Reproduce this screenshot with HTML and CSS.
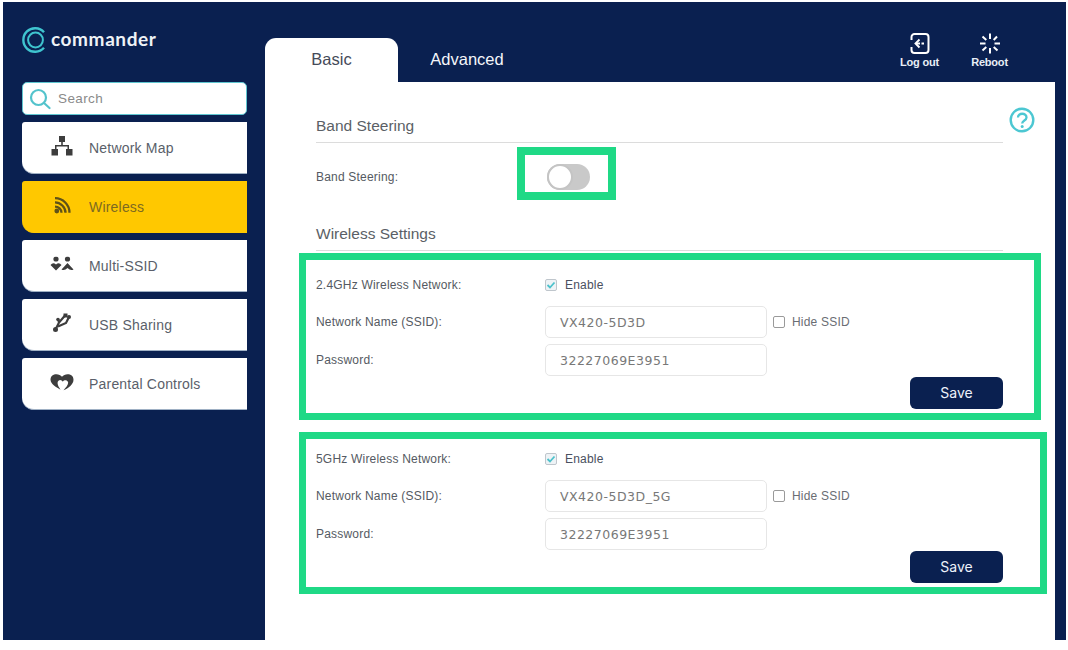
FILE: index.html
```html
<!DOCTYPE html>
<html lang="en">
<head>
<meta charset="utf-8">
<title>Commander</title>
<link rel="stylesheet" href="styles.css">
</head>
<body>
<div class="app">
  <aside class="sidebar">
    <div class="logo">
      <svg class="logo-mark" width="26" height="26" viewBox="0 0 26 26" fill="none" stroke="#3fc4cf">
        <path d="M22 5.200A11.800 11.800 0 1 0 22 20.800" stroke-width="2.400"/>
        <circle cx="13.500" cy="13" r="7.400" stroke-width="2"/>
      </svg>
      <span class="logo-text">commander</span>
    </div>
    <div class="search">
      <svg width="22" height="22" viewBox="0 0 22 22" fill="none" stroke="#53c3cc" stroke-width="2.200">
        <circle cx="9.500" cy="9.500" r="7.500"/>
        <path d="M15 15l5.500 5" stroke-linecap="round"/>
      </svg>
      <span>Search</span>
    </div>
    <nav class="menu">
      <a class="menu-item">
        <svg class="menu-icon" width="22" height="20" viewBox="0 0 22 20" fill="#3d3d3d">
          <rect x="8" y="0" width="6" height="6"/>
          <rect x="0.500" y="13" width="6.500" height="6.500"/>
          <rect x="15" y="13" width="6.500" height="6.500"/>
          <path d="M10.200 6h1.600v3H18v4h-1.500v-2.500h-11V13H4V9h6.200z"/>
        </svg>
        <span>Network Map</span>
      </a>
      <a class="menu-item active">
        <svg class="menu-icon" width="20" height="18" viewBox="0 0 20 18" fill="none" stroke="#5f5218" stroke-width="2.300">
          <path d="M3 2C11 2 17.500 8.500 17.500 16.500"/>
          <path d="M3 6.200C8.500 6.200 13.500 11 13.500 16.500"/>
          <path d="M3 10.400C6.500 10.400 9.500 13 9.500 16.500"/>
          <circle cx="4.800" cy="14.800" r="2.400" fill="#5f5218" stroke="none"/>
        </svg>
        <span>Wireless</span>
      </a>
      <a class="menu-item">
        <svg class="menu-icon" width="24" height="16" viewBox="0 0 24 16" fill="#3d3d3d">
          <circle cx="6" cy="2.600" r="2.600"/>
          <circle cx="17.500" cy="2.600" r="2.600"/>
          <path d="M0.500 8.500Q3 5.500 6 8Q9 5.500 11.500 8.500L6 14Z"/>
          <path d="M11.500 13L17.500 6.500L23.500 13Q20.500 14.500 17.500 11.500Q14.500 14.500 11.500 13Z"/>
        </svg>
        <span>Multi-SSID</span>
      </a>
      <a class="menu-item">
        <svg class="menu-icon" width="20" height="20" viewBox="0 0 20 20" fill="none" stroke="#3d3d3d" stroke-width="2.200">
          <path d="M3.500 16.500L7 9.500L13 2.500"/>
          <path d="M7 9.500L6.500 7"/>
          <path d="M6 13.500L14 10L16.500 5"/>
          <circle cx="3.500" cy="16.500" r="2.500" fill="#3d3d3d" stroke="none"/>
          <rect x="11.500" y="0.500" width="4" height="4" fill="#3d3d3d" stroke="none"/>
          <circle cx="17" cy="4" r="2" fill="#3d3d3d" stroke="none"/>
          <circle cx="6" cy="6.500" r="1.800" fill="#3d3d3d" stroke="none"/>
        </svg>
        <span>USB Sharing</span>
      </a>
      <a class="menu-item">
        <svg class="menu-icon" width="24" height="18" viewBox="0 0 24 18" fill="#3d3d3d">
          <path d="M12 3.500C9 -0.500 0.500 0 0.500 6.500C0.500 11 6.500 14 10.500 16.500C8 13 6.500 9.500 8.500 7.500C10 6 12 7 12.800 8.500C14 6.500 17 6.500 18 8.800C18.800 11 16 14.500 13.500 17C18.500 15 23.500 11 23.500 6.500C23.500 0 15 -0.500 12 3.500Z"/>
        </svg>
        <span>Parental Controls</span>
      </a>
    </nav>
  </aside>
  <main class="main">
    <header class="topbar">
      <div class="tabs">
        <a class="tab active">Basic</a>
        <a class="tab">Advanced</a>
      </div>
      <div class="actions">
        <a class="action">
          <svg width="20" height="21" viewBox="0 0 20 21" fill="none" stroke="#fff" stroke-width="2">
            <path d="M1.500 7V4A3 3 0 0 1 4.500 1H15.500A3 3 0 0 1 18.500 4V17A3 3 0 0 1 15.500 20H4.500A3 3 0 0 1 1.500 17V14"/>
            <path d="M9.500 6.500L5.500 10.500L9.500 14.500" stroke-width="1.900"/>
            <path d="M6 10.500H10M11.500 10.500H14"/>
          </svg>
          <span>Log out</span>
        </a>
        <a class="action">
          <svg width="22" height="21" viewBox="0 0 22 21" fill="none" stroke="#fff" stroke-width="2">
            <path d="M11 0.500V6M11 15V20.500M1 10.500H6.500M15.500 10.500H21M3.500 3.500L7.300 7M14.700 14L18.500 17.500M18 3.500L14.700 7M7.300 14L3.500 17.500"/>
          </svg>
          <span>Reboot</span>
        </a>
      </div>
    </header>
    <section class="content">
      <svg class="help" width="26" height="26" viewBox="0 0 26 26" fill="none" stroke="#4cc7d2" stroke-width="2.400">
        <circle cx="13" cy="13" r="11.300"/>
        <path d="M9 10.500C9 5.500 17.500 5.500 17.500 10.500C17.500 13.500 13.200 13.500 13.200 16.500" stroke-width="2.300"/>
        <circle cx="13.200" cy="19.500" r="1.500" fill="#4cc7d2" stroke="none"/>
      </svg>
      <div class="mark mark-toggle"></div>
      <div class="mark mark-24"></div>
      <div class="mark mark-5"></div>

      <h2 class="section-title">Band Steering</h2>
      <div class="steer-row">
        <label class="field-label">Band Steering:</label>
        <span class="toggle"><span class="knob"></span></span>
      </div>

      <h2 class="section-title">Wireless Settings</h2>

      <div class="network first">
        <div class="row-enable">
          <label class="field-label">2.4GHz Wireless Network:</label>
          <span class="check on"><svg width="10" height="10" viewBox="0 0 10 10" fill="none" stroke="#4cc1cb" stroke-width="1.800"><path d="M1.500 5L4 7.500L8.500 2.500"/></svg></span>
          <span class="check-text dark">Enable</span>
        </div>
        <div class="row-input">
          <label class="field-label">Network Name (SSID):</label>
          <span class="input">VX420-5D3D</span>
          <span class="check"></span>
          <span class="check-text">Hide SSID</span>
        </div>
        <div class="row-input">
          <label class="field-label">Password:</label>
          <span class="input">32227069E3951</span>
        </div>
        <div class="row-save"><button class="save">Save</button></div>
      </div>

      <div class="network">
        <div class="row-enable">
          <label class="field-label">5GHz Wireless Network:</label>
          <span class="check on"><svg width="10" height="10" viewBox="0 0 10 10" fill="none" stroke="#4cc1cb" stroke-width="1.800"><path d="M1.500 5L4 7.500L8.500 2.500"/></svg></span>
          <span class="check-text dark">Enable</span>
        </div>
        <div class="row-input">
          <label class="field-label">Network Name (SSID):</label>
          <span class="input">VX420-5D3D_5G</span>
          <span class="check"></span>
          <span class="check-text">Hide SSID</span>
        </div>
        <div class="row-input">
          <label class="field-label">Password:</label>
          <span class="input">32227069E3951</span>
        </div>
        <div class="row-save"><button class="save">Save</button></div>
      </div>
    </section>
  </main>
</div>
</body>
</html>
```
FILE: styles.css
```css
* { box-sizing: border-box; }
html, body { margin: 0; padding: 0; background: #fff; }
body { font-family: "Liberation Sans", Arial, sans-serif; width: 1068px; height: 650px; overflow: hidden; }

.app {
  display: flex;
  width: 1063px;
  height: 638px;
  margin: 2px 0 0 3px;
  padding-right: 11px;
  background: #0a2050;
}

.sidebar { width: 262px; flex: none; padding: 0 18px 0 19px; }

.logo { display: flex; align-items: center; gap: 3px; height: 26px; margin-top: 25px; }
.logo-mark { flex: none; }
.logo-text { font-family: "Lato", sans-serif; font-size: 19px; font-weight: 700; color: #eef2f6; letter-spacing: 0.6px; line-height: 22px; margin-top: -2px; }

.search {
  display: flex;
  align-items: center;
  gap: 7px;
  height: 33px;
  margin-top: 29px;
  padding-left: 6px;
  background: #fff;
  border: 1.500px solid #5fc6d0;
  border-radius: 5px;
  font-size: 13.500px;
  letter-spacing: 0.4px;
  color: #8a8a8a;
}

.menu { display: flex; flex-direction: column; gap: 7px; margin-top: 7px; }
.menu-item {
  display: flex;
  align-items: center;
  height: 52px;
  padding-top: 1px;
  background: #fff;
  border-radius: 3px 0 0 12px;
  border-bottom: 1px solid #9fb0c4;
  font-size: 14px;
  letter-spacing: 0.2px;
  color: #5a5f6a;
  position: relative;
}
.menu-item span { margin-left: 67px; }
.menu-icon { position: absolute; left: 40px; top: 50%; transform: translate(-50%, -60%); }
.menu-item.active { background: #ffc800; border-bottom-color: #ffc800; color: #7d6a22; }

.main { flex: 1; display: flex; flex-direction: column; min-width: 0; }

.topbar { display: flex; justify-content: space-between; height: 80px; }
.tabs { display: flex; align-items: flex-end; }
.tab {
  display: flex;
  align-items: center;
  justify-content: center;
  width: 133px;
  height: 44px;
  padding-bottom: 1px;
  font-size: 16.500px;
  color: #f4f6fa;
}
.tab.active { background: #fff; color: #454a58; border-radius: 11px 11px 0 0; }
.tab:not(.active) { width: 138px; }

.actions { display: flex; gap: 32px; padding: 31px 46px 0 0; }
.action { display: flex; flex-direction: column; align-items: center; gap: 2px; width: 39px; font-size: 11px; font-weight: 700; color: #e9eef6; letter-spacing: -0.2px; white-space: nowrap; }
.action:first-child { position: relative; left: 1px; }

.content { flex: 1; position: relative; background: #fff; padding: 32px 52px 0 51px; }

.help { position: absolute; left: 744px; top: 25px; }

.mark { position: absolute; border: 7px solid #1fd986; pointer-events: none; }
.mark-toggle { left: 252px; top: 65px; width: 99px; height: 53px; border-width: 8px; }
.mark-24 { left: 34px; top: 171px; width: 742px; height: 167px; }
.mark-5 { left: 34px; top: 350px; width: 748px; height: 162px; }

.section-title {
  height: 29px;
  margin: 0;
  padding-top: 3px;
  font-size: 15.500px;
  font-weight: 400;
  color: #5b5f66;
  border-bottom: 1.500px solid #dcdcdc;
}

.field-label { width: 229px; flex: none; font-size: 12px; letter-spacing: 0.2px; color: #555a62; }

.steer-row { display: flex; align-items: center; height: 79px; padding-bottom: 12px; }
.toggle { position: relative; width: 43px; height: 26px; margin-left: 2px; background: #c9c9c9; border-radius: 13px; }
.knob { position: absolute; left: 0; top: 0; width: 26px; height: 26px; background: #fff; border: 2.500px solid #c4c4c4; border-radius: 50%; }

.network { margin-top: 39px; }
.network.first { margin-top: 23px; }
.row-enable { display: flex; align-items: center; height: 22px; }
.row-input { display: flex; align-items: center; height: 32px; margin-top: 6px; }
.row-enable + .row-input { margin-top: 10px; }
.row-input:nth-child(3) .field-label { margin-top: -1px; }

.input {
  display: flex;
  align-items: center;
  width: 222px;
  height: 32px;
  padding-left: 14px;
  border: 1px solid #e6e6e6;
  border-radius: 5px;
  font-family: "DejaVu Sans", sans-serif;
  font-size: 12.500px;
  letter-spacing: 0.5px;
  color: #787878;
  background: #fff;
}
.check {
  display: flex;
  align-items: center;
  justify-content: center;
  width: 12px;
  height: 12px;
  border: 1px solid #9a9a9a;
  border-radius: 2px;
  background: #fff;
  flex: none;
}
.row-input .check { margin-left: 6px; }
.check.on { border-color: #bfc6cc; background: #eef3f6; }
.check-text { margin-left: 7px; font-size: 12px; letter-spacing: 0.2px; color: #6a6d73; }
.check-text.dark { margin-left: 8px; color: #4a5060; }

.row-save { display: flex; justify-content: flex-end; margin-top: 1px; }
.save {
  width: 93px;
  height: 32px;
  padding: 0 0 2px;
  border: 0;
  border-radius: 6px;
  background: #0a2050;
  color: #eef2fa;
  font-family: "Inter", "Liberation Sans", sans-serif;
  font-size: 14px;
}
```
